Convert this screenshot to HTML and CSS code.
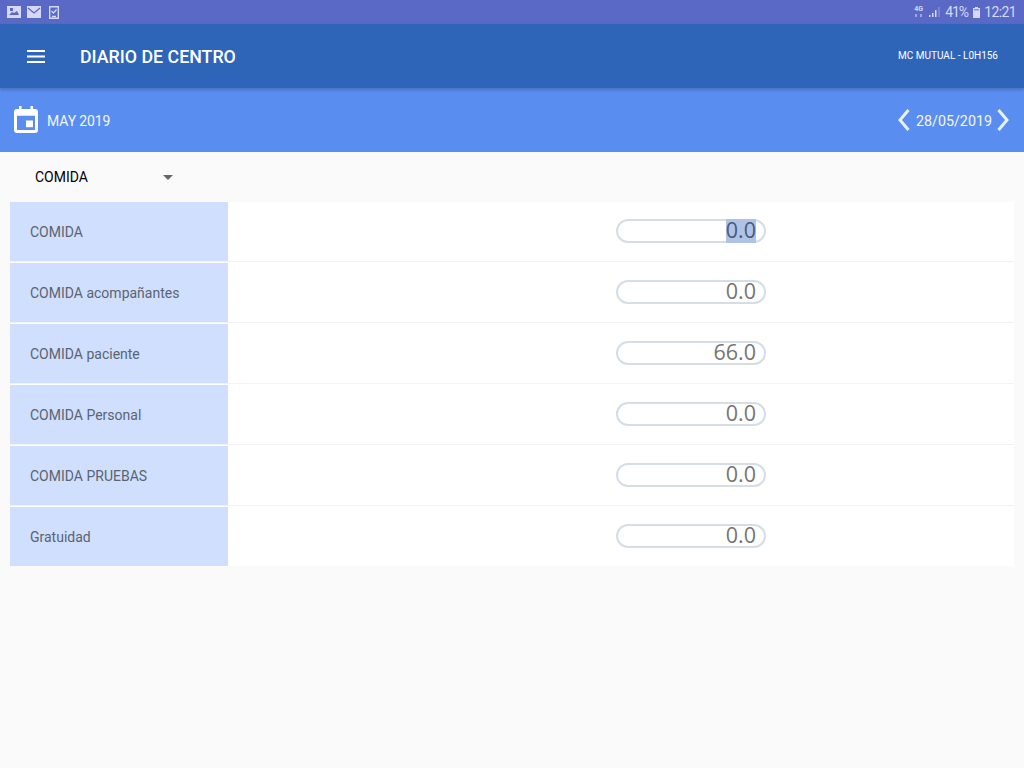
FILE: index.html
```html
<!DOCTYPE html>
<html lang="en">
<head>
    <meta charset="UTF-8">
    <meta name="viewport" content="width=device-width, initial-scale=1.0">
    <title>Diario de Centro</title>
    <link rel="stylesheet" href="styles.css">
</head>
<body>

    <div class="status-bar">
        <div class="status-icons">
            <svg width="14" height="12" viewBox="0 0 14 12"><path fill="#d5d9f5" d="M0 0h14v12H0z"/><path fill="#5a68c6" d="M2 9l3-3 2 1 3-2 2 4zM3 2h3v3H3z"/></svg>
            <svg width="14" height="12" viewBox="0 0 14 12"><path fill="#d5d9f5" d="M0 0h14v12H0z"/><path fill="none" stroke="#5a68c6" stroke-width="1.200" d="M1 2l6 5 6-5"/></svg>
            <svg class="task-icon" width="10" height="13" viewBox="0 0 10 13"><path fill="none" stroke="#d5d9f5" stroke-width="1.400" d="M.7.7h8.600v11.600H.7z"/><path fill="none" stroke="#d5d9f5" stroke-width="1.300" d="M2.500 5l2 2 3-3.500M3 10.500h4"/></svg>
        </div>
        <div class="status-right">
            <div class="net">
                <span class="net-label">4G</span>
                <svg width="9" height="3" viewBox="0 0 9 3"><path fill="#d5d9f5" opacity=".55" d="M1 0h2v3H1zM6 0h2v3H6z"/></svg>
            </div>
            <svg class="signal" width="11" height="10" viewBox="0 0 11 10"><path fill="#d5d9f5" d="M0 8h1.500v2H0zM3 6h1.500v4H3zM6 3h1.500v7H6z"/><path fill="#d5d9f5" opacity=".5" d="M9.500 0h1v10h-1z"/></svg>
            <span class="battery-text">41%</span>
            <svg class="battery" width="7" height="11" viewBox="0 0 7 11"><path fill="#d5d9f5" d="M2 0h3v1h2v10H0V1h2z"/><path fill="#5a68c6" opacity=".6" d="M1 2h5v1.500H1z"/></svg>
            <span class="clock">12:21</span>
        </div>
    </div>

    <header class="app-bar">
        <button class="menu-btn" aria-label="Menu">
            <svg width="18" height="13" viewBox="0 0 18 13"><path fill="#fff" d="M0 0h18v2H0zM0 5.500h18v2H0zM0 11h18v2H0z"/></svg>
        </button>
        <h1>DIARIO DE CENTRO</h1>
        <span class="center-code">MC MUTUAL - L0H156</span>
    </header>

    <div class="date-bar">
        <div class="month">
            <svg class="calendar" width="24" height="27" viewBox="0 0 24 28" preserveAspectRatio="none"><path fill="#fff" d="M5 0h2.500v3h9V0H19v3h2a3 3 0 0 1 3 3v19a3 3 0 0 1-3 3H3a3 3 0 0 1-3-3V6a3 3 0 0 1 3-3h2zM3 10v15h18V10z"/><path fill="#fff" d="M12 15h7v7h-7z"/></svg>
            <span class="month-name">MAY 2019</span>
        </div>
        <div class="day-nav">
            <svg width="12" height="22" viewBox="0 0 12 22"><path fill="none" stroke="#e9f0fe" stroke-width="3" d="M10.500 1L2 11l8.500 10"/></svg>
            <span class="day">28/05/2019</span>
            <svg width="12" height="22" viewBox="0 0 12 22"><path fill="none" stroke="#e9f0fe" stroke-width="3" d="M1.500 1L10 11 1.500 21"/></svg>
        </div>
    </div>

    <div class="selector">
        <span>COMIDA</span>
        <i class="caret"></i>
    </div>

    <div class="rows">
        <div class="row">
            <div class="row-label">COMIDA</div>
            <div class="row-field"><div class="pill"><span class="selected">0.0</span></div></div>
        </div>
        <div class="row">
            <div class="row-label">COMIDA acompañantes</div>
            <div class="row-field"><div class="pill">0.0</div></div>
        </div>
        <div class="row">
            <div class="row-label">COMIDA paciente</div>
            <div class="row-field"><div class="pill">66.0</div></div>
        </div>
        <div class="row">
            <div class="row-label">COMIDA Personal</div>
            <div class="row-field"><div class="pill">0.0</div></div>
        </div>
        <div class="row">
            <div class="row-label">COMIDA PRUEBAS</div>
            <div class="row-field"><div class="pill">0.0</div></div>
        </div>
        <div class="row">
            <div class="row-label">Gratuidad</div>
            <div class="row-field"><div class="pill">0.0</div></div>
        </div>
    </div>

</body>
</html>
```

FILE: styles.css
```css
html, body {
    height: 100%;
}
body {
    margin: 0;
    overflow: hidden;
    font-family: Roboto, "Liberation Sans", sans-serif;
    background-color: #fafafa;
}
.status-bar {
    height: 24px;
    padding: 0 8px 0 7px;
    display: flex;
    align-items: center;
    justify-content: space-between;
    background-color: #5a68c6;
    color: #d5d9f5;
}
.status-icons {
    display: flex;
    align-items: center;
    gap: 6px;
}
.task-icon {
    margin-left: 2px;
}
.status-right {
    display: flex;
    align-items: center;
    font-size: 14px;
}
.net {
    display: flex;
    flex-direction: column;
    width: 9px;
    gap: 1px;
    margin-top: -2px;
}
.net-label {
    font-size: 7px;
    line-height: 7px;
    font-weight: bold;
}
.signal {
    margin-left: 6px;
}
.battery-text {
    margin-left: 5px;
    letter-spacing: -1px;
}
.battery {
    margin-left: 5px;
}
.clock {
    margin-left: 4px;
    letter-spacing: -0.6px;
}
.app-bar {
    height: 64px;
    box-sizing: border-box;
    padding: 0 26px 0 27px;
    display: flex;
    align-items: center;
    background-color: #2f65b9;
    box-shadow: 0 2px 3px rgba(0, 0, 0, 0.2);
    position: relative;
    color: white;
}
.menu-btn {
    width: 18px;
    height: 13px;
    padding: 0;
    border: none;
    background: none;
    display: flex;
    margin-right: 35px;
}
.app-bar h1 {
    margin: 0;
    flex: 1;
    font-size: 17.800px;
    font-weight: 500;
}
.center-code {
    font-size: 10px;
    margin-bottom: 2px;
}
.date-bar {
    height: 64px;
    box-sizing: border-box;
    padding: 0 15px 0 14px;
    display: flex;
    align-items: center;
    justify-content: space-between;
    background-color: #5a8df0;
    color: #f2f6ff;
    font-size: 14px;
}
.month {
    display: flex;
    align-items: center;
    gap: 9px;
}
.calendar {
    margin-bottom: 2px;
}
.month-name {
    padding-top: 1px;
    letter-spacing: -0.1px;
}
.day-nav {
    display: flex;
    align-items: center;
    gap: 5px;
}
.day {
    padding: 2px 0 0 1px;
    font-size: 14.300px;
}
.selector {
    height: 50px;
    width: 173px;
    box-sizing: border-box;
    padding-left: 35px;
    display: flex;
    align-items: center;
    justify-content: space-between;
    font-size: 14px;
    color: black;
}
.caret {
    border-left: 5px solid transparent;
    border-right: 5px solid transparent;
    border-top: 5px solid #666;
}
.rows {
    margin: 0 10px;
    background-color: white;
}
.row {
    display: flex;
    height: 60px;
    margin-bottom: 1px;
    box-sizing: border-box;
    background-color: white;
    border-bottom: 1px solid #f3f3f3;
}
.row:last-child {
    height: 59px;
    margin-bottom: 0;
    border-bottom: none;
}
.row-label {
    width: 218px;
    box-sizing: border-box;
    padding-left: 20px;
    display: flex;
    align-items: center;
    background-color: #cfdffd;
    color: #5a6472;
    font-size: 14px;
}
.row-field {
    flex: 1;
    padding: 17px 0 0 388px;
}
.pill {
    width: 150px;
    height: 24px;
    box-sizing: border-box;
    padding-right: 8px;
    border: 2px solid #d5dde6;
    border-radius: 12px;
    text-align: right;
    font-family: "Open Sans", sans-serif;
    font-size: 21.500px;
    line-height: 18px;
    color: #757575;
}
.selected {
    display: inline-block;
    height: 24px;
    margin-top: -2px;
    line-height: 22px;
    vertical-align: top;
    background-color: #aec3e6;
    color: #4a5a78;
}
```
